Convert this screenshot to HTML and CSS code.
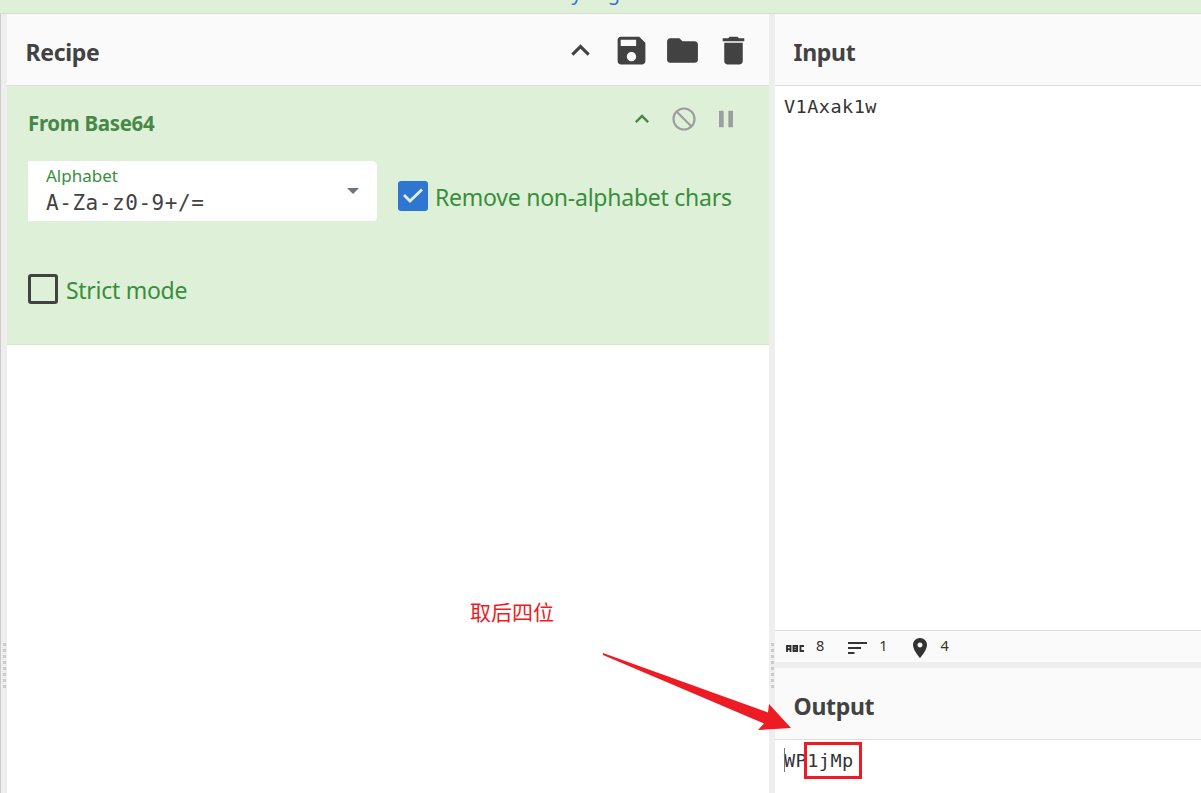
FILE: index.html
```html
<!DOCTYPE html>
<html lang="en">
<head>
<meta charset="utf-8">
<title>Recipe</title>
<link rel="stylesheet" href="styles.css">
</head>
<body>
<div class="app">
  <div class="banner"><span class="banner-text">days ago</span></div>
  <main class="workspace">
    <div class="gutter gutter-left"><i class="grip"></i></div>
    <section class="recipe">
      <header class="title-bar">
        <h1 class="t-recipe">Recipe</h1>
        <div class="tools">
          <svg width="37" height="37" viewBox="0 0 24 24"><path d="M12 8l-6 6 1.41 1.41L12 10.83l4.59 4.58L18 14z"/></svg>
          <svg width="37" height="37" viewBox="0 0 24 24"><path d="M17 3H5c-1.11 0-2 .9-2 2v14c0 1.1.89 2 2 2h14c1.1 0 2-.9 2-2V7l-4-4zm-5 16c-1.66 0-3-1.34-3-3s1.34-3 3-3 3 1.34 3 3-1.34 3-3 3zm3-10H5V5h10v4z"/></svg>
          <svg width="37" height="37" viewBox="0 0 24 24"><path d="M10 4H4c-1.1 0-1.99.9-1.99 2L2 18c0 1.1.9 2 2 2h16c1.1 0 2-.9 2-2V8c0-1.1-.9-2-2-2h-8l-2-2z"/></svg>
          <svg width="37" height="37" viewBox="0 0 24 24"><path d="M6 19c0 1.1.9 2 2 2h8c1.1 0 2-.9 2-2V7H6v12zM19 4h-3.5l-1-1h-5l-1 1H5v2h14V4z"/></svg>
        </div>
      </header>
      <article class="operation">
        <div class="op-head">
          <h2 class="op-name">From Base64</h2>
          <div class="op-tools">
            <svg class="green" width="28" height="28" viewBox="0 0 24 24"><path d="M12 8l-6 6 1.41 1.41L12 10.83l4.59 4.58L18 14z"/></svg>
            <svg width="28" height="28" viewBox="0 0 24 24"><g fill="none" stroke="currentColor" stroke-width="1.9"><circle cx="12" cy="12" r="9"/><path d="M5.6 5.6l12.8 12.8"/></g></svg>
            <svg width="28" height="28" viewBox="0 0 24 24"><path d="M6 19h4V5H6v14zm8-14v14h4V5h-4z"/></svg>
          </div>
        </div>
        <div class="args">
          <div class="select">
            <div><div class="select-label">Alphabet</div><div class="select-value">A-Za-z0-9+/=</div></div>
            <i class="caret"></i>
          </div>
          <div class="check check-remove">
            <span class="box box-on"><svg width="30" height="30" viewBox="0 0 30 30"><path d="M6 14l6 6L24 8.5" fill="none" stroke="#dff0d8" stroke-width="2.8"/></svg></span>
            <span class="remove-text">Remove non-alphabet chars</span>
          </div>
        </div>
        <div class="check check-strict"><span class="box"></span><span class="strict-text">Strict mode</span></div>
      </article>
    </section>
    <div class="gutter"><i class="grip"></i></div>
    <section class="io">
      <header class="title-bar"><h1 class="t-input">Input</h1></header>
      <div class="input-text">V1Axak1w</div>
      <footer class="status">
        <svg class="abc" width="19" height="7" viewBox="0 0 19 7"><path d="M1 7V1h3.5v6M1 4.2h3.5M7.5 1h3.6v5H7.5zM7.5 3.5h3.5M18 1h-3.5v5H18" fill="none" stroke="#333" stroke-width="1.9"/></svg><span class="s-count">8</span>
        <svg class="lines" width="19" height="12" viewBox="0 0 19 12"><path d="M0 1h19M0 6h13M0 11h6.5" fill="none" stroke="#333" stroke-width="2"/></svg><span class="s-line">1</span>
        <svg class="pin" width="24" height="24" viewBox="0 0 24 24"><path d="M12 2C8.13 2 5 5.13 5 9c0 5.25 7 13 7 13s7-7.75 7-13c0-3.87-3.13-7-7-7zm0 9.5c-1.38 0-2.5-1.12-2.5-2.5s1.12-2.5 2.5-2.5 2.5 1.12 2.5 2.5-1.12 2.5-2.5 2.5z"/></svg><span class="s-pos">4</span>
      </footer>
      <div class="row-gutter"></div>
      <header class="title-bar"><h1 class="t-output">Output</h1></header>
      <div class="output-text"><span class="cursor"></span>WP1jMp</div>
    </section>
  </main>
  <div class="note">取后四位</div>
  <svg class="arrow" width="190" height="80" viewBox="602 652 190 80"><path d="M603 653L768 712.5 769 704 791 728 758 730 764 723.5 603 655z"/></svg>
  <div class="mark"></div>
</div>
</body>
</html>
```
FILE: styles.css
```css
* { box-sizing: border-box; }
body { margin: 0; background: #fff; color: #424242; font-family: "Noto Sans", "Open Sans", sans-serif; }
h1, h2 { margin: 0; white-space: nowrap; }
svg { display: block; fill: currentColor; flex: none; }
.app { position: relative; width: 1201px; height: 793px; overflow: hidden; display: flex; flex-direction: column; }
.banner { flex: none; height: 14px; overflow: hidden; background: #dff0d8; border-bottom: 1px solid #d8dcd6; }
.banner-text { display: block; margin: -20px 0 0 548px; font-size: 20px; line-height: 26px; color: #2f76d2; }
.workspace { flex: 1; display: flex; min-height: 0; }
.gutter { width: 6px; flex: none; background: #eee; display: flex; padding: 629px 0 0 2px; }
.gutter-left { width: 7px; border-left: 1px solid #ccc; }
.grip { width: 3px; height: 46px; background: repeating-linear-gradient(#ccc 0 3px, #eee 3px 6px); }
.recipe { width: 762px; flex: none; }
.title-bar { height: 72px; flex: none; display: flex; justify-content: space-between; background: #fafafa; border-bottom: 1px solid #ddd; padding: 0 17.5px 0 18.5px; }
.title-bar h1 { font-size: 23px; line-height: 32px; font-weight: 700; letter-spacing: -0.3px; margin-top: 22px; }
.tools { display: flex; gap: 14px; padding-top: 17.5px; }
.operation { height: 259px; flex: none; background: #dff0d8; border-bottom: 1px solid #d0e9c6; padding: 0 21px; }
.op-head { display: flex; justify-content: space-between; height: 75px; }
.op-name { color: #468847; font-size: 20.5px; line-height: 28px; letter-spacing: -0.33px; padding-top: 23px; }
.op-tools { display: flex; gap: 14px; padding: 19px 8px 0 0; color: #9e9e9e; }
.green { color: #468847; }
.args { display: flex; gap: 21px; height: 60px; }
.select { width: 349px; height: 60px; flex: none; display: flex; justify-content: space-between; background: #fff; border-radius: 0 5px 4px 0; padding: 0 18px; }
.select-label { height: 21px; margin-top: 3px; overflow: hidden; font-size: 17px; line-height: 24px; color: #388e3c; }
.select-value { font-family: "DejaVu Sans Mono", monospace; font-size: 21px; line-height: 28px; letter-spacing: 0.56px; margin-top: 4px; }
.caret { width: 12px; height: 6px; margin-top: 27px; background: #6c757d; clip-path: polygon(0 0, 100% 0, 50% 100%); }
.check { display: flex; color: #388e3c; font-size: 23px; line-height: 33px; white-space: nowrap; gap: 8px; }
.check-remove { padding-top: 20px; }
.remove-text { letter-spacing: -0.24px; margin-left: -1px; }
.strict-text { letter-spacing: -0.28px; }
.check-strict { margin-top: 53px; }
.box { width: 30px; height: 30px; flex: none; border: 3px solid #424242; border-radius: 3px; }
.box-on { border: 0; background: #2f76d2; }
.io { flex: 1; min-width: 0; display: flex; flex-direction: column; }
.input-text, .output-text { font-family: "DejaVu Sans Mono", monospace; font-size: 18.5px; letter-spacing: 0.48px; line-height: 28px; padding: 7px 9px; color: #333; }
.input-text { height: 544px; }
.status { display: flex; align-items: flex-start; height: 32px; background: #fafafa; border-top: 1px solid #ddd; color: #333; padding-left: 11px; font-size: 14.5px; line-height: 20px; }
.status span { margin-top: 4px; }
.abc { margin: 14px 11px 0 0; }
.lines { margin: 11px 12px 0 24px; }
.pin { margin: 5px 9px 0 20px; }
.row-gutter { height: 6px; background: #eee; }
.output-text { position: relative; }
.cursor { position: absolute; left: 9px; top: 8px; width: 1px; height: 24px; background: #777; }
.note { position: absolute; left: 470px; top: 595px; color: #ed1c24; font: 21px/32px "Noto Sans CJK SC", sans-serif; }
.arrow { position: absolute; left: 602px; top: 652px; color: #ed1c24; }
.mark { position: absolute; left: 804px; top: 742px; width: 58px; height: 37px; border: 3px solid #ed1c24; }
```
